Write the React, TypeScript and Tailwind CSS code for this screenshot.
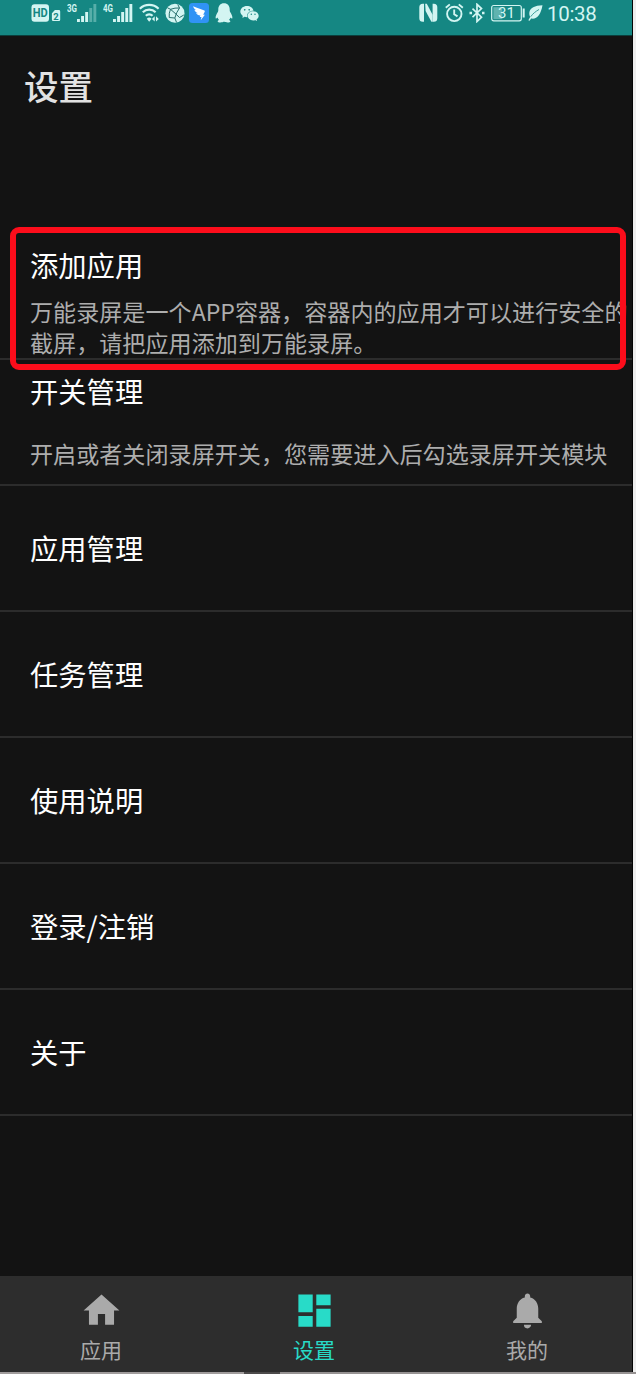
import { MdDashboard, MdHome, MdNotifications } from 'react-icons/md'
import { AiFillWechat } from 'react-icons/ai'
import type { IconType } from 'react-icons'
import clsx from 'clsx'

interface SettingItem {
  title: string
}

interface TabItem {
  label: string
  icon: IconType
  active?: boolean
}

const items: SettingItem[] = [
  { title: '应用管理' },
  { title: '任务管理' },
  { title: '使用说明' },
  { title: '登录/注销' },
  { title: '关于' },
]

const tabs: TabItem[] = [
  { label: '应用', icon: MdHome },
  { label: '设置', icon: MdDashboard, active: true },
  { label: '我的', icon: MdNotifications },
]

function Signal({ label, level }: { label: string; level: number }) {
  const heights = [3, 6, 10, 14, 18]
  return (
    <svg width="30" height="20" viewBox="0 0 30 20" fill="currentColor">
      <text x="0" y="9" fontSize="10.5" fontWeight="700" fontFamily="Roboto, sans-serif" textLength="10" lengthAdjust="spacingAndGlyphs">
        {label}
      </text>
      {heights.map((h, i) => (
        <rect key={h} x={10 + i * 4.1} y={19 - h} width="2.9" height={h} opacity={i < level ? 1 : 0.35} />
      ))}
    </svg>
  )
}

function StatusBar() {
  return (
    <div className="flex h-[36px] items-start justify-between border-b border-[#0b3f3d] bg-[#158783] pt-[3px] pr-[32px] pl-[31px] text-[#d3f5f2]">
      <div className="flex h-[20px] items-center">
        {/* HD voice, SIM 2 */}
        <svg width="30" height="20" viewBox="0 0 30 20" fill="currentColor">
          <rect x="0.5" y="1.3" width="17.5" height="17.5" rx="3" />
          <text x="1.8" y="14.4" fontSize="12.5" fontWeight="700" fontFamily="Roboto, sans-serif" textLength="15" lengthAdjust="spacingAndGlyphs" fill="#158783">
            HD
          </text>
          <path d="M20.9 10.3l3-3.2h4a1.3 1.3 0 0 1 1.3 1.3v8.4a1.3 1.3 0 0 1-1.3 1.3h-5.7a1.3 1.3 0 0 1-1.3-1.3z" />
          <text x="22.3" y="16.5" fontSize="9.5" fontWeight="700" fontFamily="Roboto, sans-serif" fill="#158783">
            2
          </text>
        </svg>
        <div className="ml-[6px] flex gap-[6px]">
          <Signal label="3G" level={3} />
          <Signal label="4G" level={5} />
        </div>

        {/* Wifi */}
        <svg className="ml-[6px]" width="22" height="20" viewBox="0 0 22 20" fill="none" stroke="currentColor" strokeWidth="2.2">
          <path d="M0.8 5.7a13.7 13.7 0 0 1 18.8 0" />
          <path d="M3.8 9.3a9.2 9.2 0 0 1 12.8 0" />
          <path d="M6.8 12.8a5 5 0 0 1 6.8 0" />
          <path d="M7.8 15.8a3.4 3.4 0 0 1 4.8 0l-2.4 2.9z" fill="currentColor" stroke="none" />
          <path d="M15.7 13.3v5.2L12.9 15.9zM17 13.3v5.2l2.8-2.6z" fill="currentColor" stroke="none" />
        </svg>

        {/* Globe */}
        <svg className="ml-[4px]" width="20" height="20" viewBox="0 0 20 20" fill="none" stroke="#28706d" strokeWidth="1">
          <circle cx="10" cy="10.3" r="9.5" fill="#d3f5f2" stroke="none" />
          <path d="M5.5 6.3Q10 4.6 14.5 5M5.500 6.300Q3.800 10 4.200 14.500M14.500 5Q11.200 9.500 9.800 15M4.200 14.500L9.800 15M5.500 6.300Q10 10 14.500 14.500M14.500 5L12.800 1.500M5.500 6.300L2.500 4.800M9.800 15L11.500 19.300M14.500 14.500L18.800 12" />
        </svg>

        {/* DingTalk */}
        <svg className="ml-[4px]" width="20" height="20" viewBox="0 0 20 20">
          <rect width="20" height="20" rx="3.5" fill="#3093f5" />
          <path d="M4.2 3.3c4 2 7.7 2.7 11.2 4.2.5.3.5.8.3 1.3l-1.5 3h1.7l-4.2 5.4.8-3.3h-1.7l.5-1.6c-2.2.4-3.6-.8-4.2-2.2l2 .1C6.5 9.2 5.7 8 5.5 6.7l1.7.5C5.300 6 4.300 4.800 4.200 3.300z" fill="#fff" />
        </svg>

        {/* QQ */}
        <svg className="ml-[6px]" width="18" height="20" viewBox="0 0 18 20" fill="currentColor">
          <path d="M9 0.3c3.7 0 5.7 2.7 5.7 6 0 1 0 1.7.3 2.4 1.3 2 2.600 4.300 2.400 6.200-.1 1-.9 1-1.900-.4-.3 1-.8 1.800-1.500 2.500.9.400 1.400.9 1.300 1.500-.2 1.300-4.600 1.300-6.300.1-1.700 1.200-6.100 1.200-6.300-.1-.1-.6.400-1.100 1.300-1.500-.7-.7-1.200-1.500-1.500-2.500-1 1.400-1.800 1.400-1.900.4-.2-1.900 1.100-4.200 2.400-6.200.3-.7.3-1.400.3-2.400 0-3.300 2-6 5.700-6z" />
        </svg>
        <AiFillWechat className="ml-[6px] size-[21px]" />
      </div>

      <div className="flex h-[20px] items-center">
        {/* NFC */}
        <svg width="19" height="20" viewBox="0 0 19 20" fill="currentColor">
          <path d="M3.800 0.800H5V18.800H3.800a3.500 3.500 0 0 1-3.500-3.500V4.300a3.500 3.500 0 0 1 3.500-3.500z" />
          <path d="M14.800 0.800H13.600V18.800h1.200a3.500 3.500 0 0 0 3.500-3.500V4.300a3.500 3.500 0 0 0-3.500-3.500z" />
          <path d="M6.200 0.800h1.600l5.800 11v7h-1.200L6.600 8z" />
        </svg>

        {/* Alarm */}
        <svg className="ml-[7px]" width="19" height="20" viewBox="0 0 19 20" fill="none" stroke="currentColor" strokeWidth="1.9">
          <circle cx="9.3" cy="10.9" r="7.2" />
          <path d="M9.2 6.5v4.7l3.3 2.2M.8 4.8l4-3.4M17.8 4.8l-4-3.4" />
        </svg>

        {/* Bluetooth */}
        <svg className="ml-[5px]" width="17" height="20" viewBox="0 0 17 20" fill="none" stroke="currentColor" strokeWidth="1.7">
          <path d="M3.5 5.7l9 8.5-4.5 4.3V1.3l4.5 4.3-9 8.6" />
          <path d="M0.5 10h2.5M13 10h2.5" strokeWidth="2.3" />
        </svg>

        {/* Battery */}
        <svg className="ml-[5px]" width="35" height="20" viewBox="0 0 35 20">
          <rect x="0.7" y="2.5" width="29.600" height="15.3" rx="2" fill="none" stroke="currentColor" strokeWidth="1.2" />
          <rect x="2.4" y="4.2" width="9" height="12" fill="currentColor" opacity="0.4" />
          <path d="M32.700 5.5v9" stroke="currentColor" strokeWidth="2" />
          <text x="15.5" y="15.3" fontSize="15" textAnchor="middle" fontFamily="Roboto, sans-serif" fill="currentColor">
            31
          </text>
        </svg>

        {/* Power saving leaf */}
        <svg className="ml-[2px]" width="15" height="20" viewBox="0 0 15 20" fill="none">
          <path d="M14.5 2.3C7 2.6 1.8 5 1.300 9.800c-.1 1.700.2 3 .9 4.100L0.300 17.200l1.300.6 1.500-2.300c5.800 1 9.600-3.300 11.400-13.200z" fill="currentColor" />
          <path d="M2.7 13.7C5 10.500 7.500 8.500 11 6.500" stroke="#158783" strokeWidth="0.800" />
        </svg>
        <span className="ml-[4px] w-[53px] pt-[1px] font-[Roboto,sans-serif] text-[20.5px] leading-[20px] tracking-[-0.3px]">10:38</span>
      </div>
    </div>
  )
}

function TabBar() {
  return (
    <nav className="h-[96px] overflow-hidden bg-[#2d2d2d]">
      <div className="-ml-[5px] flex">
        {tabs.map(({ label, icon: Icon, active }) => (
          <div
            key={label}
            className={clsx(
              'flex w-[213px] shrink-0 flex-col items-center pt-[13px]',
              active ? 'text-[#28dbc8]' : 'text-[#aaaaaa]',
            )}
          >
            <Icon className="size-[43px]" />
            <span className="mt-[2px] -ml-[1px] text-[21px] leading-[30px]">{label}</span>
          </div>
        ))}
      </div>
    </nav>
  )
}

export default function App() {
  return (
    <div className="flex h-[1374px] w-[636px] flex-col overflow-hidden bg-[#969292] font-['Noto_Sans_CJK_SC',sans-serif]">
      <div className="flex h-[1372px] bg-[#eeeeee]">
        <div className="flex w-[633px] flex-col border-r border-[#050505] bg-[#131313]">
          <StatusBar />

          <h1 className="mt-[24px] ml-[24px] h-[50px] text-[34.5px] leading-[50px] font-medium text-[#e2e2e2]">设置</h1>

          <main className="mt-[124px] flex-1 text-white">
            <div className="relative h-[126px] border-b-2 border-[#2c2c2c] pt-[11px] pl-[30px]">
              <h2 className="text-[28.3px] leading-[40px]">添加应用</h2>
              <p className="mt-[11px] text-[23.1px] leading-[31px] whitespace-nowrap text-[#adadad]">
                万能录屏是一个APP容器，容器内的应用才可以进行安全的
                <br />
                截屏，请把应用添加到万能录屏。
              </p>
              {/* Highlight around the first entry */}
              <div className="absolute top-[-7px] left-[10px] h-[143px] w-[616px] rounded-[9px] border-6 border-[#fc0d1b]" />
            </div>

            <div className="h-[126px] border-b-2 border-[#2c2c2c] pt-[11px] pl-[30px]">
              <h2 className="text-[28.3px] leading-[40px]">开关管理</h2>
              <p className="mt-[27px] text-[23.1px] leading-[31px] whitespace-nowrap text-[#adadad]">
                开启或者关闭录屏开关，您需要进入后勾选录屏开关模块
              </p>
            </div>

            {items.map((item) => (
              <div key={item.title} className="flex h-[126px] items-center border-b-2 border-[#2c2c2c] pl-[30px]">
                <h2 className="text-[28.3px] leading-[40px]">{item.title}</h2>
              </div>
            ))}
          </main>

          <TabBar />
        </div>
      </div>
      <div className="flex h-[2px]">
        <div className="w-[244px] bg-[#a09c9c]" />
        <div className="w-[36px] bg-[#4c4a4a]" />
      </div>
    </div>
  )
}
